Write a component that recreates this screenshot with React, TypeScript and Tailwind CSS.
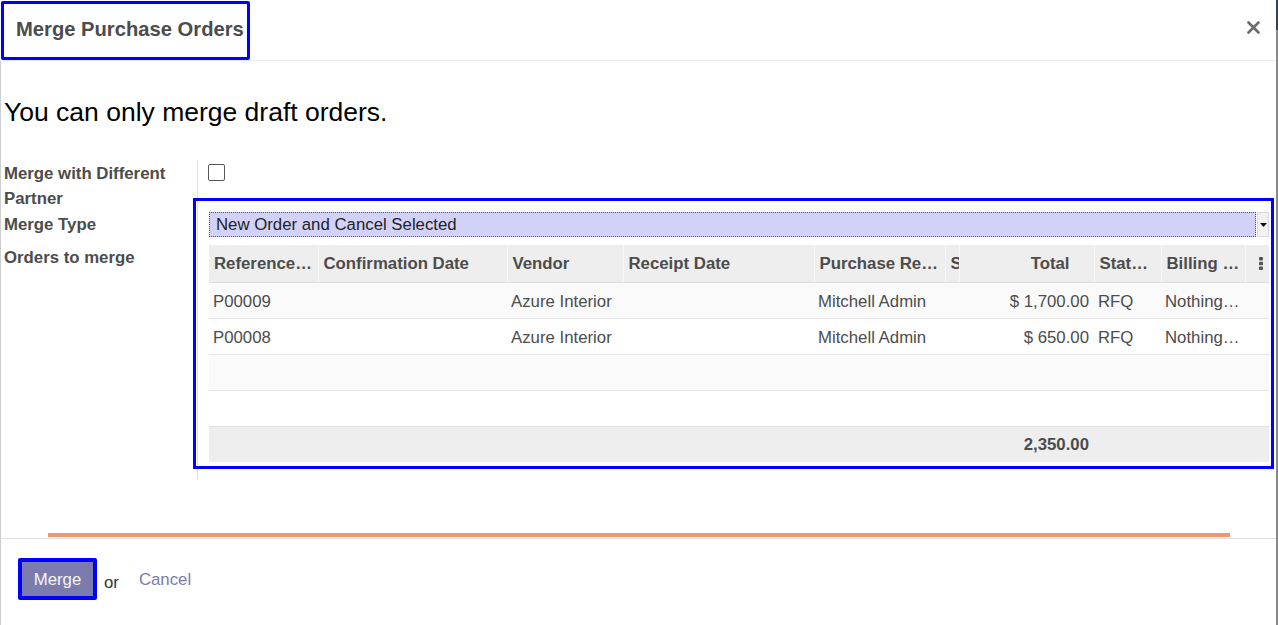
import React from 'react'

const cols = [
  { w: 109, head: 'Reference…' },
  { w: 189, head: 'Confirmation Date' },
  { w: 116, head: 'Vendor' },
  { w: 191, head: 'Receipt Date' },
  { w: 131, head: 'Purchase Re…' },
  { w: 14, head: 'S' },
  { w: 135, head: 'Total', right: true },
  { w: 67, head: 'Stat…' },
  { w: 84, head: 'Billing …' },
  { w: 24, head: '' },
]

const rows = [
  ['P00009', '', 'Azure Interior', '', 'Mitchell Admin', '', '$ 1,700.00', 'RFQ', 'Nothing…', ''],
  ['P00008', '', 'Azure Interior', '', 'Mitchell Admin', '', '$ 650.00', 'RFQ', 'Nothing…', ''],
  ['', '', '', '', '', '', '', '', '', ''],
  ['', '', '', '', '', '', '', '', '', ''],
]

function Dots() {
  return (
    <svg width="4" height="13" viewBox="0 0 4 13">
      <rect x="0" y="0" width="4" height="3.4" rx="0.8" fill="#555" />
      <rect x="0" y="4.8" width="4" height="3.4" rx="0.8" fill="#555" />
      <rect x="0" y="9.6" width="4" height="3.4" rx="0.8" fill="#555" />
    </svg>
  )
}

export default function App() {
  return (
    <div className="w-[1278px] h-[625px] flex bg-white overflow-hidden font-['Liberation_Sans',Arial,sans-serif]">
      <div className="flex-1 flex flex-col">
        {/* Header */}
        <header className="h-[61px] border-b border-[#e9ecef] flex items-start justify-between shrink-0">
          <div className="mt-[1px] ml-[1px] h-[59px] border-[3px] border-[#0000ff] rounded-[2px] flex items-center pl-[12px] pr-[3px] pb-[3px] text-[20.2px] font-bold text-[#4c4c4c]">
            Merge Purchase Orders
          </div>
          <svg className="mt-[21px] mr-[16px]" width="13" height="13" viewBox="0 0 13 13">
            <path d="M1.5 1.5 L11.5 11.5 M11.5 1.5 L1.5 11.5" stroke="#6b6b6b" strokeWidth="2.6" strokeLinecap="round" />
          </svg>
        </header>

        <div className="flex-1 flex flex-col border-l border-[#cdcdcd]">
          {/* Body */}
          <div className="pl-[3px] pr-[2px]">
            <p className="pt-[36px] text-[26.5px] leading-[31px] text-black">You can only merge draft orders.</p>

            <div className="mt-[32px] grid grid-cols-[193px_1fr]">
              <div className="pt-[1px] text-[16.8px] font-bold leading-[25px] text-[#4c4c4c]">
                <div className="pr-[20px]">Merge with Different Partner</div>
                <div className="mt-[1px]">Merge Type</div>
                <div className="mt-[8px]">Orders to merge</div>
              </div>

              <div className="border-l border-[#dee2e6] pl-[10px] pt-[4px] pb-[11px]">
                <div className="w-[17px] h-[17px] border border-[#555] rounded-[2px] bg-white" />

                <div className="mt-[17px] -ml-[15px] border-[3px] border-[#0000ff] pl-[13px] pr-[2px] pt-[11px] pb-[4px]">
                  {/* Select */}
                  <div className="flex h-[25px]">
                    <div className="flex-1 bg-[#d2d2f9] border border-dotted border-[#555] flex items-center pl-[6px] pt-[1px] text-[16.8px] text-[#222]">
                      New Order and Cancel Selected
                    </div>
                    <div className="w-[12px] ml-[1px] bg-[#f2f2f2] border border-[#d8d8d8] flex items-center justify-center">
                      <svg width="7" height="4" viewBox="0 0 7 4">
                        <path d="M0 0 H7 L3.5 4 Z" fill="#111" />
                      </svg>
                    </div>
                  </div>

                  {/* Table */}
                  <table className="mt-[8px] w-[1060px] table-fixed border-collapse text-[16.8px] text-[#4c4c4c]">
                    <colgroup>
                      {cols.map((c, i) => (
                        <col key={i} style={{ width: c.w }} />
                      ))}
                    </colgroup>
                    <thead>
                      <tr className="h-[37px] bg-[#eeeeee]">
                        {cols.map((c, i) => (
                          <th
                            key={i}
                            className={`h-[37px] font-bold whitespace-nowrap overflow-hidden text-clip border-b border-[#dddddd] ${
                              i === 0 ? '' : 'border-l border-l-[#f8f8f8]'
                            } ${c.right ? 'text-right pr-[24px] pl-[5px]' : 'text-left px-[5px]'}`}
                          >
                            {i === cols.length - 1 ? (
                              <div className="flex justify-end pr-[1px]">
                                <Dots />
                              </div>
                            ) : (
                              c.head
                            )}
                          </th>
                        ))}
                      </tr>
                    </thead>
                    <tbody>
                      {rows.map((r, ri) => (
                        <tr key={ri} className={ri % 2 === 0 ? 'bg-[#fafafa]' : 'bg-white'}>
                          {r.map((v, ci) => (
                            <td
                              key={ci}
                              className={`h-[36px] px-[4px] pt-[4px] whitespace-nowrap overflow-hidden border-t border-[#e6e6e6] ${
                                cols[ci].right ? 'text-right pr-[5px]' : 'text-left'
                              }`}
                            >
                              {v}
                            </td>
                          ))}
                        </tr>
                      ))}
                      <tr className="bg-[#eeeeee]">
                        {cols.map((c, ci) => (
                          <td
                            key={ci}
                            className={`h-[36px] px-[4px] border-t border-[#e2e2e2] font-bold ${c.right ? 'text-right pr-[5px]' : ''}`}
                          >
                            {c.right ? '2,350.00' : ''}
                          </td>
                        ))}
                      </tr>
                    </tbody>
                  </table>
                </div>
              </div>
            </div>
          </div>

          {/* Orange bar */}
          <div className="mt-[53px] ml-[47px] mr-[46px] h-[4px] bg-[#f4956f]" />

          {/* Footer */}
          <footer className="mt-[1px] flex-1 border-t border-[#dee2e6] pt-[19px] pl-[17px]">
            <div className="flex items-center">
              <div className="border-[4px] border-[#0000ff] rounded-[2px]">
                <div className="w-[71px] h-[34px] bg-[#7c7bad] flex items-center justify-center pt-[2px] text-[16.8px] text-[#f5f5f5]">
                  Merge
                </div>
              </div>
              <span className="ml-[7px] mt-[7px] text-[16.8px] text-[#333]">or</span>
              <span className="ml-[20px] mt-[2px] text-[16.8px] text-[#7c7bad]">Cancel</span>
            </div>
          </footer>
        </div>
      </div>

      {/* Right edge */}
      <div className="w-[2px] flex flex-col">
        <div className="h-[30px] bg-[#34444f]" />
        <div className="flex-1 bg-[#8a8a8a]" />
      </div>
    </div>
  )
}
